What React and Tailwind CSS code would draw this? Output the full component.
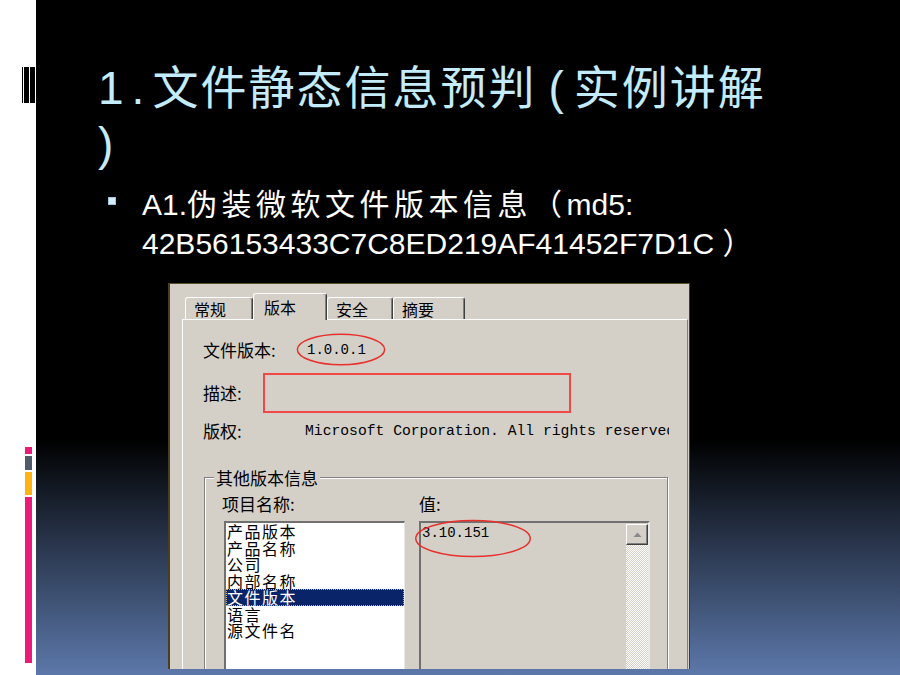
import React from 'react';

const Ellipse = ({ className }) => (
  <svg
    className={className}
    viewBox="0 0 100 40"
    preserveAspectRatio="none"
  >
    <ellipse
      cx="50"
      cy="20"
      rx="48.5"
      ry="18.5"
      fill="none"
      stroke="#e8302c"
      strokeWidth="1.5"
      vectorEffect="non-scaling-stroke"
    />
  </svg>
);

const Tab = ({ label, active, width }) =>
  active ? (
    <div
      className={`relative z-10 -mb-[1px] h-[27px] ${width} flex items-center pl-[10px] bg-[#d4d0c8] border-t border-l border-white border-r border-r-[#404040] shadow-[inset_-1px_0_0_#808080] rounded-t-[3px] text-[16px]`}
    >
      {label}
    </div>
  ) : (
    <div
      className={`h-[22px] ${width} flex items-center pl-[8px] border-t border-l border-white border-r border-r-[#404040] shadow-[inset_-1px_0_0_#808080] rounded-t-[3px] text-[16px]`}
    >
      {label}
    </div>
  );

const items = ['产品版本', '产品名称', '公司', '内部名称', '文件版本', '语言', '源文件名'];

const VersionDialog = () => (
  <div className="relative ml-[132px] mt-[20px] w-[522px] h-[386px] overflow-hidden bg-[#d4d0c8] border-t border-t-[#5a4a2c] border-l-2 border-l-[#4a3d22] border-r border-r-[#3c3c3c] font-['Noto_Sans_CJK_SC',sans-serif] text-black flex flex-col">
    {/* tabs */}
    <div className="h-[35px] shrink-0 flex items-end pl-[15px]">
      <Tab label="常规" width="w-[68px]" />
      <Tab label="版本" width="w-[74px]" active />
      <Tab label="安全" width="w-[66px]" />
      <Tab label="摘要" width="w-[72px]" />
    </div>

    {/* page */}
    <div className="flex-1 ml-[12px] mr-[1px] border-t border-l border-white border-r border-r-[#808080] pt-[13px] pl-[20px] text-[17px]">
      <div className="h-[34px] flex items-center">
        <span className="w-[104px] shrink-0">文件版本:</span>
        <span className="font-['Liberation_Mono',monospace] text-[14px]">1.0.0.1</span>
      </div>
      <div className="mt-[6px] h-[40px] flex items-center">
        <span className="w-[60px] shrink-0">描述:</span>
        <div className="w-[308px] h-[40px] border-2 border-[#f04848]" />
      </div>
      <div className="mt-[8px] h-[20px] flex items-center">
        <span className="w-[102px] shrink-0">版权:</span>
        <span className="w-[364px] overflow-hidden whitespace-nowrap font-['Liberation_Mono',monospace] text-[14.7px]">
          Microsoft Corporation. All rights reserved.
        </span>
      </div>

      {/* group box */}
      <div className="mt-[36px] ml-[1px] w-[464px] h-[240px] border border-[#808080] shadow-[inset_1px_1px_0_#fff,1px_1px_0_#fff]">
        <div className="-mt-[10px] ml-[9px] px-[2px] w-fit bg-[#d4d0c8] leading-[19px]">其他版本信息</div>
        <div className="mt-[9px] pl-[17px] flex leading-[16px]">
          <span className="w-[197px]">项目名称:</span>
          <span>值:</span>
        </div>
        <div className="mt-[9px] pl-[17px] flex">
          <div className="ml-[2px] w-[181px] h-[200px] bg-white border-t-2 border-l-2 border-[#707070] border-r border-r-[#e8e8e8] text-[16px] tracking-[1.5px] leading-[16.5px]">
            {items.map((it) =>
              it === '文件版本' ? (
                <div
                  key={it}
                  className="pl-[1px] bg-[#0a246a] text-white outline-1 outline-dotted outline-[#c8b070] -outline-offset-1"
                >
                  {it}
                </div>
              ) : (
                <div key={it} className="pl-[1px]">
                  {it}
                </div>
              )
            )}
          </div>
          <div className="ml-[14px] w-[231px] h-[200px] flex bg-[#d4d0c8] border-t-2 border-l-2 border-[#707070] border-r-2 border-r-[#e8e8e8]">
            <div className="flex-1 pl-[1px] pt-[2px] leading-[16px] font-['Liberation_Mono',monospace] text-[14px]">
              3.10.151
            </div>
            <div className="w-[22px] mt-[1px] flex flex-col">
              <div className="h-[21px] flex items-center justify-center bg-[#d4d0c8] border-t border-l border-white border-r border-b border-r-[#404040] border-b-[#404040] shadow-[inset_-1px_-1px_0_#808080]">
                <svg width="9" height="6" viewBox="0 0 9 6">
                  <polygon points="4.5,0.5 8.5,5 0.5,5" fill="#8a8a8a" />
                </svg>
              </div>
              <div className="flex-1 bg-[repeating-conic-gradient(#ffffff_0_25%,#d4d0c8_0_50%)] bg-[length:2px_2px]" />
            </div>
          </div>
        </div>
      </div>
    </div>

    {/* red annotations drawn over the screenshot */}
    <Ellipse className="absolute left-[126px] top-[49px] w-[90px] h-[33px] pointer-events-none" />
    <Ellipse className="absolute left-[244px] top-[235px] w-[118px] h-[39px] pointer-events-none" />
  </div>
);

export default function App() {
  return (
    <div className="w-[900px] h-[675px] flex overflow-hidden bg-white">
      {/* left margin with slide decorations */}
      <aside className="w-[36px] shrink-0 bg-white flex flex-col">
        <div className="mt-[67px] ml-[22px] h-[36px] flex">
          <div className="w-[1px] bg-black" />
          <div className="w-[1px]" />
          <div className="w-[5px] bg-black" />
          <div className="w-[1px]" />
          <div className="w-[5px] bg-black" />
        </div>
        <div className="mt-[344px] ml-[25px] w-[7px] flex flex-col gap-[2px]">
          <div className="h-[7px] bg-[#e91b7b]" />
          <div className="h-[14px] bg-[#4f5a6b]" />
          <div className="h-[23px] bg-[#fbb414]" />
          <div className="h-[166px] bg-[#e91b7b]" />
        </div>
      </aside>

      {/* slide */}
      <main className="flex-1 flex flex-col bg-[linear-gradient(to_bottom,#000000_0%,#000000_65%,#5c78aa_100%)]">
        <h1 className="pt-[60px] pl-[62px] text-[46px] leading-[56px] font-normal text-[#c3ebf9] font-['Liberation_Sans','Noto_Sans_CJK_SC',sans-serif]">
          <span className="tracking-[8px]">1.</span>
          <span className="tracking-[2px]">文件静态信息预判</span>
          <span className="ml-[12px] mr-[10px]">(</span>
          <span className="tracking-[2px]">实例讲解</span>
          <br />)
        </h1>

        <ul className="mt-[13px] pl-[72px] text-[30px] leading-[39px] text-white font-['Liberation_Sans','Noto_Sans_CJK_SC',sans-serif]">
          <li className="flex">
            <span className="mt-[12px] w-[8px] h-[8px] shrink-0 bg-[#d6ecfb] border border-[#9fc6e0]" />
            <span className="ml-[26px]">
              A1.<span className="tracking-[4.5px]">伪装微软文件版本信息（</span>md5:
              <br />
              42B56153433C7C8ED219AF41452F7D1C <span>）</span>
            </span>
          </li>
        </ul>

        <VersionDialog />
      </main>
    </div>
  );
}
